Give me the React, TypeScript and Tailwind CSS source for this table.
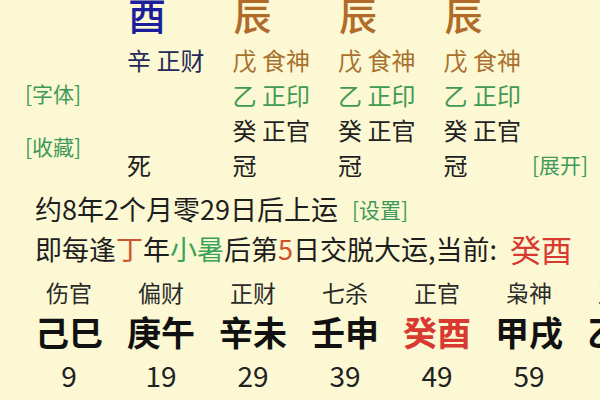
const FONT = "font-['Noto_Sans_CJK_SC','Noto_Sans',sans-serif]";

type Pillar = {
  big: string;
  bigColor: string;
  rows: { text: string; color: string }[];
  stage: string;
};

const PILLARS: Pillar[] = [
  {
    big: "酉",
    bigColor: "text-[#1c1f9c]",
    rows: [
      { text: "辛 正财", color: "text-[#262858]" },
      { text: "", color: "" },
      { text: "", color: "" },
    ],
    stage: "死",
  },
  ...[0, 1, 2].map(() => ({
    big: "辰",
    bigColor: "text-[#b06a2a]",
    rows: [
      { text: "戊 食神", color: "text-[#a8712f]" },
      { text: "乙 正印", color: "text-[#3f9a52]" },
      { text: "癸 正官", color: "text-[#222222]" },
    ],
    stage: "冠",
  })),
];

const DAYUN = [
  { god: "伤官", gz: "己巳", age: 9 },
  { god: "偏财", gz: "庚午", age: 19 },
  { god: "正财", gz: "辛未", age: 29 },
  { god: "七杀", gz: "壬申", age: 39 },
  { god: "正官", gz: "癸酉", age: 49, current: true },
  { god: "枭神", gz: "甲戌", age: 59 },
  { god: "正印", gz: "乙亥", age: 69 },
];

export default function App() {
  return (
    <div
      className={`${FONT} h-[400px] w-[600px] overflow-hidden bg-[#fbf8d3] text-[#1e1e1e]`}
    >
      {/* 四柱 */}
      <div className="grid grid-cols-[127px_105.5px_105.5px_105.5px_88.5px_auto]">
        <div className="flex flex-col pl-[25px] pt-[76px] text-[21px] leading-[35px] text-[#3f9a5a]">
          <span>[字体]</span>
          <span className="mt-[18px]">[收藏]</span>
        </div>

        {PILLARS.map((p, i) => (
          <div key={i} className="flex flex-col text-[24px] leading-[35px]">
            <span
              className={`-mt-[4px] mb-[9.5px] pl-[1px] text-[38px] font-medium leading-[36px] ${p.bigColor}`}
            >
              {p.big}
            </span>
            {p.rows.map((r, j) => (
              <span key={j} className={`h-[35px] whitespace-pre ${r.color}`}>
                {r.text}
              </span>
            ))}
            <span>{p.stage}</span>
          </div>
        ))}

        <div className="flex flex-col justify-end">
          <span className="text-[21px] leading-[35px] text-[#3f9a5a]">
            [展开]
          </span>
        </div>
      </div>

      {/* 起运 */}
      <div className="mt-[7px] flex items-center pl-[35px] text-[27px] leading-[40px]">
        <span>约8年2个月零29日后上运</span>
        <span className="ml-[14px] text-[21px] text-[#3f9a5a]">[设置]</span>
      </div>
      <div className="flex items-center pl-[35px] text-[27px] leading-[40px]">
        <span>
          即每逢<span className="text-[#d0522c]">丁</span>年
          <span className="text-[#3aa35a]">小暑</span>后第
          <span className="text-[#d0522c]">5</span>日交脱大运,当前:
        </span>
        <span className="ml-[13px] text-[31px] text-[#d83a32]">癸酉</span>
      </div>

      {/* 大运 */}
      <div className="mt-[6px] flex pl-[23px]">
        {DAYUN.map((d) => (
          <div
            key={d.gz}
            className="flex w-[92px] shrink-0 flex-col items-center"
          >
            <span className="text-[23px] leading-[34px] text-[#2a2a2a]">
              {d.god}
            </span>
            <span
              className={`text-[34px] font-bold leading-[46px] ${
                d.current ? "text-[#d83a32]" : "text-[#111111]"
              }`}
            >
              {d.gz}
            </span>
            <span className="text-[28px] leading-[40px] text-[#222222]">
              {d.age}
            </span>
          </div>
        ))}
      </div>
    </div>
  );
}
